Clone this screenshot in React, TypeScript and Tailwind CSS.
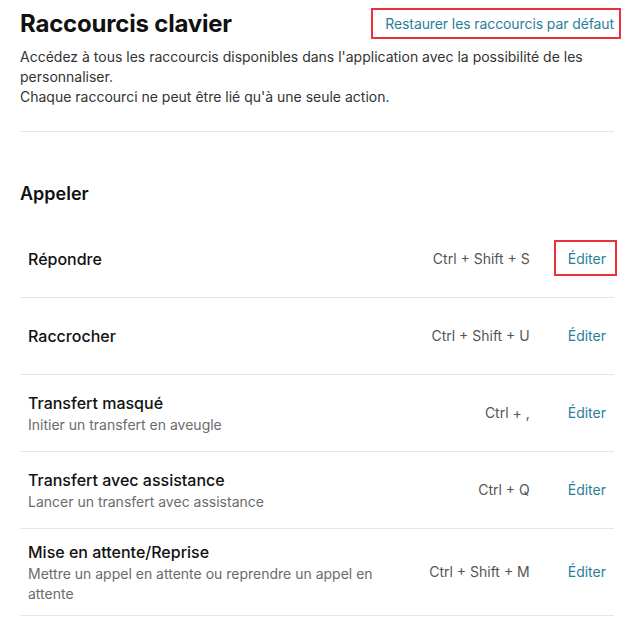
const shortcuts = [
  { title: "Répondre", keys: "Ctrl + Shift + S", highlighted: true },
  { title: "Raccrocher", keys: "Ctrl + Shift + U" },
  { title: "Transfert masqué", description: "Initier un transfert en aveugle", keys: "Ctrl + ," },
  { title: "Transfert avec assistance", description: "Lancer un transfert avec assistance", keys: "Ctrl + Q" },
  {
    title: "Mise en attente/Reprise",
    description: "Mettre un appel en attente ou reprendre un appel en attente",
    keys: "Ctrl + Shift + M",
  },
];

const App = () => {
  return (
    <div className="min-h-screen bg-white font-['Inter','Noto_Sans',sans-serif] text-[#111]">
      <div className="ml-5 w-[594px]">
        <div className="flex items-center justify-between pt-2">
          <h1 className="text-[24px] font-bold leading-8 tracking-[-0.2px]">Raccourcis clavier</h1>
          <button className="relative text-[14px] leading-5 tracking-[-0.1px] text-[#2a7f9a]">
            Restaurer les raccourcis par défaut
            <span className="pointer-events-none absolute -left-[14px] -right-[7px] -top-[6px] -bottom-[5px] border-2 border-[#e8333d]" />
          </button>
        </div>

        <div className="mt-[7px] border-b border-[#e6e6e6] pb-6 text-[14px] leading-5 text-[#333]">
          <p>Accédez à tous les raccourcis disponibles dans l'application avec la possibilité de les personnaliser.</p>
          <p>Chaque raccourci ne peut être lié qu'à une seule action.</p>
        </div>

        <h2 className="mt-[48px] text-[18px] font-semibold leading-7">Appeler</h2>

        <div className="mt-[13px]">
          {shortcuts.map((s, i) => (
            <div
              key={i}
              className="flex min-h-[77px] items-center border-b border-[#e6e6e6] px-2 py-[11px]"
            >
              <div className="min-w-0 flex-1 pr-4">
                <div className="text-[16px] font-medium leading-6 text-[#111]">{s.title}</div>
                {s.description && (
                  <div className="text-[14px] leading-5 text-[#6b6b6b]">{s.description}</div>
                )}
              </div>
              <div className="w-[130px] text-right text-[14px] leading-5 text-[#555]">{s.keys}</div>
              <button className="relative ml-[38px] text-[14px] leading-5 text-[#2a7f9a]">
                Éditer
                {s.highlighted && (
                  <span className="pointer-events-none absolute -left-[14px] -right-[11px] -top-[9px] -bottom-[7px] border-2 border-[#e8333d]" />
                )}
              </button>
            </div>
          ))}
        </div>
      </div>
    </div>
  );
};

export default App;
